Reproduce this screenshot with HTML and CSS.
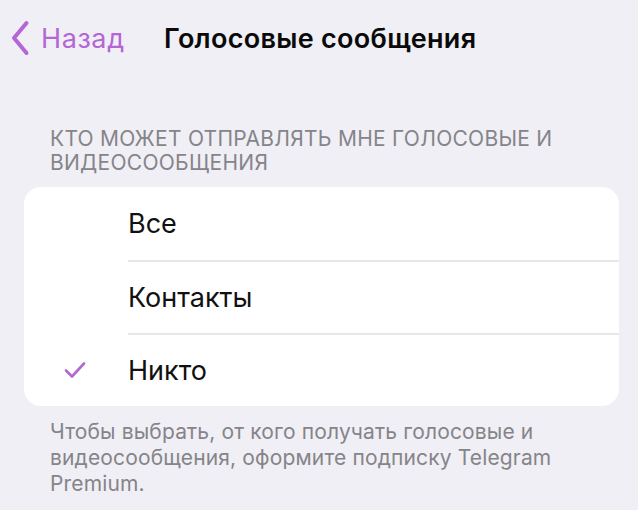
FILE: index.html
```html
<!DOCTYPE html>
<html lang="ru">
<head>
<meta charset="utf-8">
<link rel="stylesheet" href="styles.css">
</head>
<body>
<div class="screen">
  <header class="nav">
    <div class="back">
      <svg class="chev" width="20" height="36" viewBox="0 0 20 36"><path d="M16.5 3 L4 18 L16.5 33" fill="none" stroke="#b466d4" stroke-width="4" stroke-linecap="round" stroke-linejoin="round"/></svg>
      <span class="back-label">Назад</span>
    </div>
    <h1 class="title">Голосовые сообщения</h1>
  </header>

  <div class="section-head">КТО МОЖЕТ ОТПРАВЛЯТЬ МНЕ ГОЛОСОВЫЕ И ВИДЕОСООБЩЕНИЯ</div>

  <div class="card">
    <div class="row"><span class="mark"></span><span class="label">Все</span></div>
    <div class="row"><span class="mark"></span><span class="label">Контакты</span></div>
    <div class="row"><span class="mark"><svg width="22" height="18" viewBox="0 0 22 18"><path d="M2 9.5 L8 15.5 L20 2.5" fill="none" stroke="#b466d4" stroke-width="2.6" stroke-linecap="round" stroke-linejoin="round"/></svg></span><span class="label">Никто</span></div>
  </div>

  <div class="foot">Чтобы выбрать, от кого получать голосовые и видеосообщения, оформите подписку Telegram Premium.</div>
</div>
</body>
</html>
```

FILE: styles.css
```css
html, body {
  margin: 0;
  padding: 0;
  background: #f0eff5;
}
body {
  font-family: "Inter", "Liberation Sans", sans-serif;
  width: 638px;
  height: 510px;
  overflow: hidden;
}
.screen {
  display: flex;
  flex-direction: column;
}
.nav {
  display: flex;
  align-items: center;
  height: 76px;
  padding-left: 10px;
}
.back {
  display: flex;
  align-items: center;
  gap: 11px;
  width: 154px;
}
.chev {
  display: block;
}
.back-label {
  font-size: 27px;
  color: #b466d4;
  letter-spacing: 0.6px;
}
.title {
  margin: 0;
  font-size: 27px;
  font-weight: 600;
  color: #0a0a0a;
  letter-spacing: 0.3px;
}
.section-head {
  margin: 51px 40px 0 50px;
  font-size: 21px;
  line-height: 24px;
  color: #858489;
  letter-spacing: 0.27px;
}
.card {
  margin: 12px 19px 0 24px;
  background: #fff;
  border-radius: 17px;
  overflow: hidden;
}
.row {
  display: flex;
  align-items: center;
  height: 73px;
}
.mark {
  width: 104px;
  display: flex;
  justify-content: center;
  box-sizing: border-box;
  padding-right: 2px;
}
.label {
  flex: 1;
  align-self: stretch;
  display: flex;
  align-items: center;
  font-size: 27px;
  color: #111;
}
.row + .row .label {
  border-top: 2px solid #e7e6eb;
}
.foot {
  margin: 13px 60px 0 50px;
  font-size: 21px;
  line-height: 26px;
  color: #858489;
  letter-spacing: 0.15px;
}
```
